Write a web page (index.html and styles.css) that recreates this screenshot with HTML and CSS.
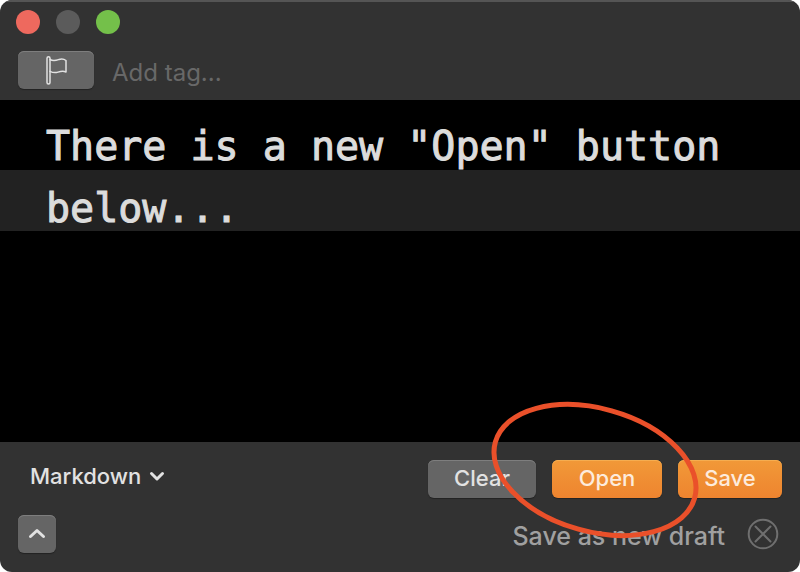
FILE: index.html
```html
<!DOCTYPE html>
<html lang="en">
<head>
<meta charset="utf-8">
<title>Draft capture</title>
<link rel="stylesheet" href="styles.css">
</head>
<body>
<main class="window">
  <header class="titlebar">
    <div class="lights">
      <button class="light light-close" type="button" aria-label="Close"></button>
      <button class="light light-minimize" type="button" aria-label="Minimize"></button>
      <button class="light light-zoom" type="button" aria-label="Zoom"></button>
    </div>
    <div class="tag-row">
      <button class="btn flag" type="button" aria-label="Flag">
        <svg width="24" height="32" viewBox="0 0 24 32" aria-hidden="true">
          <path d="M3 4.200a1.500 1.500 0 0 1 3 0V28.500a1.500 1.500 0 0 1-3 0Z"/>
          <path d="M6 5.500C9.500 7.500 12 6.500 15 5.500S20 5 22 6.500V18C19 16.500 16.500 17.300 14 18.100S9 18.800 6 17.300"/>
        </svg>
      </button>
      <input class="tag-input" type="text" placeholder="Add tag..." aria-label="Add tag">
    </div>
  </header>
  <textarea class="editor" aria-label="Draft text" spellcheck="false">There is a new "Open" button below...</textarea>
  <footer class="footer">
    <div class="row">
      <button class="syntax" type="button">Markdown
        <svg width="16" height="12" viewBox="0 0 16 12" aria-hidden="true"><path d="M2.500 3.500 8 9l5.500-5.500"/></svg>
      </button>
      <div class="actions">
        <button class="btn clear" type="button">Clear</button>
        <button class="btn accent open" type="button">Open</button>
        <button class="btn accent save" type="button">Save</button>
      </div>
    </div>
    <div class="row">
      <button class="btn expand" type="button" aria-label="Show more">
        <svg width="18" height="12" viewBox="0 0 18 12" aria-hidden="true"><path d="M2.500 8.500 9 2.500l6.500 6"/></svg>
      </button>
      <div class="status">
        <span class="status-text">Save as new draft</span>
        <button class="dismiss" type="button" aria-label="Cancel">
          <svg width="32" height="32" viewBox="0 0 32 32" aria-hidden="true"><circle cx="16" cy="16" r="14.300"/><path d="m8.500 8.500 15 15m0-15-15 15"/></svg>
        </button>
      </div>
    </div>
    <svg class="callout" width="216" height="146" viewBox="-108 -73 216 146" aria-hidden="true"><ellipse rx="103.500" ry="61.500" transform="rotate(15.700)"/></svg>
  </footer>
</main>
</body>
</html>
```

FILE: styles.css
```css
* { box-sizing: border-box; }
html { background: #fff; }
body { margin: 0; font-family: Inter, Roboto, sans-serif; }
button, input, textarea { margin: 0; padding: 0; border: 0; outline: 0; background: none; color: inherit; font: inherit; }
svg { display: block; fill: none; stroke: currentColor; stroke-linecap: round; stroke-linejoin: round; }

.window {
  display: flex;
  flex-direction: column;
  min-height: 100vh;
  overflow: hidden;
  border-radius: 12px;
  background: #323232;
  color: #e2e2e2;
}

.titlebar { padding: 10px 18px 11px; box-shadow: inset 0 2px #555; }
.lights { display: flex; gap: 16px; margin: 0 -2px 17px; }
.light { width: 24px; height: 24px; border-radius: 50%; }
.light-close { background: #ee695e; }
.light-minimize { background: #5b5b5b; }
.light-zoom { background: #74c04a; }

.tag-row { display: flex; align-items: center; gap: 18px; }
.btn {
  display: flex;
  align-items: center;
  justify-content: center;
  height: 38px;
  border-radius: 6px;
  background: #656565;
  box-shadow: inset 0 1px #7e7e7e, 0 1px 1px #222;
}
.flag { width: 76px; }
.flag svg { stroke-width: 1.5px; }
.tag-input { flex: 1; min-width: 0; height: 38px; padding-top: 4px; font-size: 24px; }
.tag-input::placeholder { color: #686868; opacity: 1; }

.editor {
  flex: 1;
  display: block;
  width: 100%;
  padding: 15px 46px 0;
  resize: none;
  overflow: hidden;
  background: #000 linear-gradient(#222, #222) 0 70px / 100% 61px no-repeat;
  color: #dcdcdc;
  font: 40px/62px "DejaVu Sans Mono", monospace;
  -webkit-text-stroke: 1px #dcdcdc;
}

.footer {
  position: relative;
  display: flex;
  flex-direction: column;
  gap: 17px;
  padding: 18px 18px 19px;
}
.row { display: flex; align-items: center; justify-content: space-between; height: 38px; }
.syntax {
  display: flex;
  align-items: center;
  gap: 8px;
  padding: 0 12px 6px;
  font-size: 22px;
  font-weight: 450;
}
.syntax svg, .expand svg { stroke-width: 3px; }
.actions { display: flex; gap: 16px; font-size: 22px; font-weight: 500; }
.actions .btn { padding: 0 0 2px; }
.actions .clear { width: 108px; }
.actions .open { width: 110px; }
.actions .save { width: 104px; }
.btn.accent {
  background: linear-gradient(#f19938, #ee842f);
  box-shadow: inset 0 1px #f5ad50, 0 1px 1px #222;
  color: #fdebdc;
}
.expand { width: 38px; }
.status { display: flex; align-items: center; gap: 22px; padding-right: 3px; color: #a0a0a0; font-size: 25px; font-weight: 500; }
.status-text { padding-top: 4px; }
.dismiss { color: #6f6f6f; }
.dismiss svg { stroke-width: 2px; }

.callout {
  position: absolute;
  top: -45px;
  right: 97px;
  color: #ea502a;
  stroke-width: 5px;
  pointer-events: none;
}
```
